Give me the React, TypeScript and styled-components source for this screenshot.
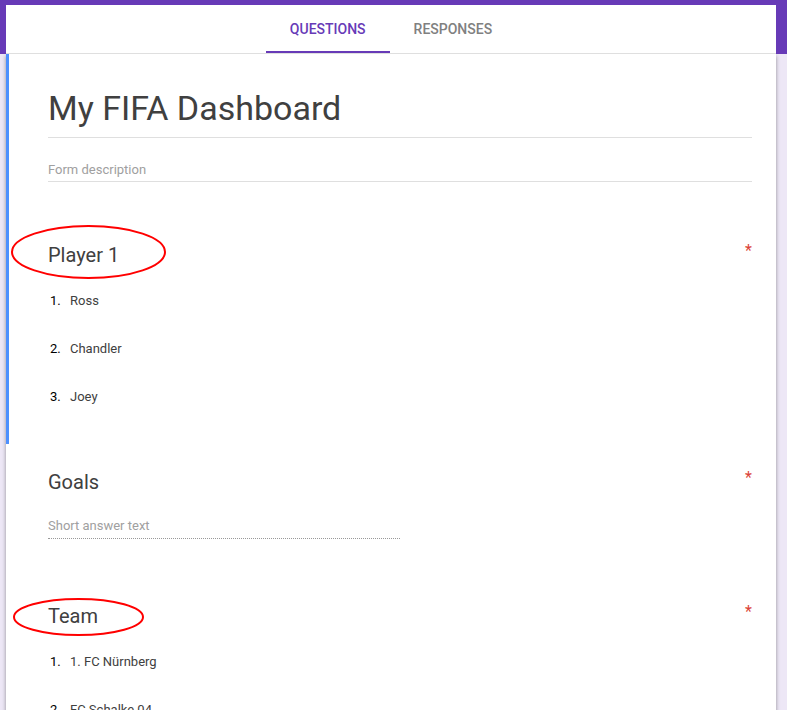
import React, { useState } from "react";
import styled, { createGlobalStyle, css } from "styled-components";

const GlobalStyle = createGlobalStyle`
  *, *::before, *::after { box-sizing: border-box; }
  body {
    margin: 0;
    font-family: Roboto, "Liberation Sans", sans-serif;
    color: #404040;
  }
`;

const Page = styled.div`
  height: 100vh;
  overflow-y: auto;
  scrollbar-width: none;
  padding: 5px 11px 0 6px;
  background: linear-gradient(#673ab7 54px, #ede7f6 54px);
`;

const TabBar = styled.div`
  display: flex;
  justify-content: center;
  background: #fff;
  border-bottom: 1px solid #dfdfdf;
  position: relative;
`;

const Tab = styled.button<{ $active: boolean }>`
  height: 48px;
  padding: 2px 24px 0;
  border: 0;
  border-bottom: 2px solid ${(p) => (p.$active ? "#673ab7" : "transparent")};
  background: none;
  color: ${(p) => (p.$active ? "#673ab7" : "#808080")};
  font: 500 14px/20px Roboto, "Liberation Sans", sans-serif;
  text-transform: uppercase;
  cursor: pointer;
`;

const Form = styled.main`
  min-height: calc(100vh - 54px);
  background: #fff;
  box-shadow: 0 2px 4px rgba(0, 0, 0, 0.4);
  clip-path: inset(0 -8px -8px -8px);
`;

const Section = styled.section<{ $selected?: boolean }>`
  padding: 24px 24px 23px 39px;
  border-left: 3px solid ${(p) => (p.$selected ? "#4d90fe" : "transparent")};
`;

const fieldBase = css`
  display: block;
  width: 100%;
  padding: 0;
  border: 0;
  border-bottom: 1px solid #dfdfdf;
  border-radius: 0;
  outline: 0;
  background: none;
  font-family: inherit;
  color: inherit;
  &::placeholder {
    color: #a0a0a0;
    opacity: 1;
  }
`;

const TitleField = styled.input`
  ${fieldBase}
  height: 60px;
  padding-top: 1px;
  font-size: 34px;
`;

const DescriptionField = styled.input`
  ${fieldBase}
  height: 24px;
  margin: 20px 0 59px;
  font-size: 13px;
`;

const AnswerField = styled.input`
  ${fieldBase}
  width: 50%;
  height: 27px;
  margin: 16px 0;
  border-bottom: 1px dotted #999;
  font-size: 13px;
`;

const QuestionHeader = styled.div`
  display: flex;
  justify-content: space-between;
  align-items: flex-start;
`;

const QuestionTitle = styled.h2`
  position: relative;
  margin: 0;
  font-size: 20px;
  line-height: 28px;
  font-weight: 400;
`;

const Required = styled.span`
  color: #db4437;
  font-size: 16px;
  line-height: 20px;
`;

const Ring = styled.svg<{ $top: number; $left: number }>`
  position: absolute;
  top: ${(p) => p.$top}px;
  left: ${(p) => p.$left}px;
  overflow: visible;
  pointer-events: none;
`;

const Options = styled.ol`
  margin: 8px 0 0;
  padding: 0;
  list-style: none;
`;

const Option = styled.li`
  display: flex;
  align-items: center;
  height: 48px;
  font-size: 13px;
  line-height: 20px;
`;

const OptionNumber = styled.span`
  width: 22px;
  padding-left: 2px;
  color: #000;
`;

type Circle = { width: number; height: number; top: number; left: number };

function Question({
  title,
  circle,
  children,
}: {
  title: string;
  circle?: Circle;
  children: React.ReactNode;
}) {
  return (
    <>
      <QuestionHeader>
        <QuestionTitle>
          {title}
          {circle && (
            <Ring
              $top={circle.top}
              $left={circle.left}
              width={circle.width}
              height={circle.height}
              aria-hidden="true"
            >
              <ellipse
                cx={circle.width / 2}
                cy={circle.height / 2}
                rx={circle.width / 2 - 1}
                ry={circle.height / 2 - 1}
                fill="none"
                stroke="#f00"
                strokeWidth="2"
              />
            </Ring>
          )}
        </QuestionTitle>
        <Required title="Required">*</Required>
      </QuestionHeader>
      {children}
    </>
  );
}

function OptionList({ items }: { items: string[] }) {
  return (
    <Options>
      {items.map((item, i) => (
        <Option key={item}>
          <OptionNumber>{i + 1}.</OptionNumber>
          <span>{item}</span>
        </Option>
      ))}
    </Options>
  );
}

const TABS = ["Questions", "Responses"];

export default function App() {
  const [tab, setTab] = useState(TABS[0]);
  return (
    <Page>
      <GlobalStyle />
      <TabBar role="tablist">
        {TABS.map((name) => (
          <Tab
            key={name}
            type="button"
            role="tab"
            aria-selected={tab === name}
            $active={tab === name}
            onClick={() => setTab(name)}
          >
            {name}
          </Tab>
        ))}
      </TabBar>
      <Form>
        <Section $selected>
          <TitleField aria-label="Form title" defaultValue="My FIFA Dashboard" />
          <DescriptionField aria-label="Form description" placeholder="Form description" />
          <Question title="Player 1" circle={{ width: 155, height: 54, top: -16, left: -37 }}>
            <OptionList items={["Ross", "Chandler", "Joey"]} />
          </Question>
        </Section>
        <Section>
          <Question title="Goals">
            <AnswerField aria-label="Goals" placeholder="Short answer text" readOnly />
          </Question>
        </Section>
        <Section>
          <Question title="Team" circle={{ width: 131, height: 38, top: -4, left: -35 }}>
            <OptionList items={["1. FC Nürnberg", "FC Schalke 04"]} />
          </Question>
        </Section>
      </Form>
    </Page>
  );
}
